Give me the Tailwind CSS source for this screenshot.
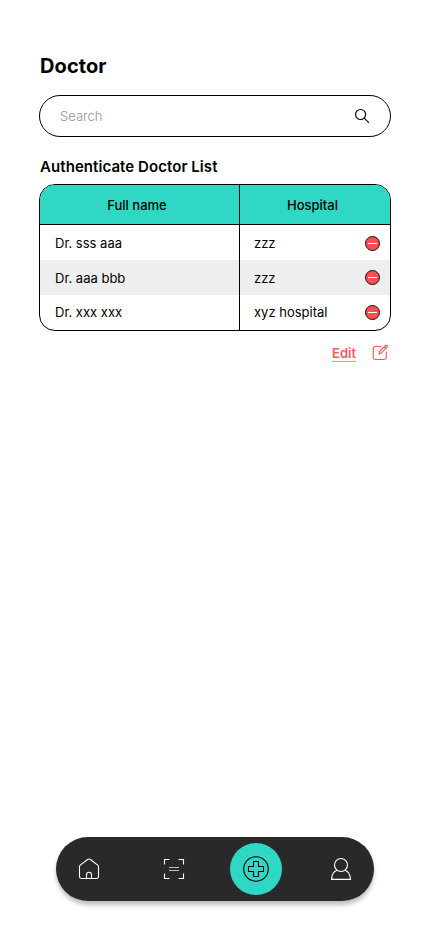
<!DOCTYPE html>
<html lang="en">
<head>
<meta charset="utf-8">
<meta name="viewport" content="width=device-width, initial-scale=1">
<title>Doctor</title>
<script src="https://cdn.jsdelivr.net/npm/@tailwindcss/browser@4"></script>
</head>
<body class="bg-white font-['Inter',sans-serif] text-black">
<div class="flex h-[932px] w-[430px] flex-col overflow-hidden">
  <main class="flex grow flex-col px-[39px] pt-[54px]">
    <h1 class="pl-px text-[20px] leading-6 font-bold tracking-[0.1px]">Doctor</h1>
    <div class="mt-[17px] flex h-[42px] items-center justify-between rounded-full border border-black pr-5 pl-5">
      <span class="pt-[2px] text-[13px] font-light text-[#949494]">Search</span>
      <svg class="size-4" viewBox="0 0 16 16" fill="none" stroke="#000" stroke-width="1.15" stroke-linecap="round"><circle cx="6.6" cy="6.5" r="5"/><path d="M10.2 10.1 14.6 14.4"/></svg>
    </div>
    <h2 class="mt-5 pl-px text-[15px] leading-5 font-semibold tracking-[0.07px]">Authenticate Doctor List</h2>
    <div class="mt-[7px] h-[147px] overflow-hidden rounded-2xl border border-black text-[13px]">
      <div class="grid h-10 grid-cols-[200px_1fr] border-b border-black bg-[#2fd8c4] text-center leading-10 font-medium">
        <div class="border-r border-black pr-[6px] pl-px">Full name</div>
        <div class="pr-[5px]">Hospital</div>
      </div>
      <div class="grid h-[35px] grid-cols-[200px_1fr] leading-[36px]">
        <div class="border-r border-black pl-[15px]">Dr. sss aaa</div>
        <div class="flex items-center justify-between pr-[10px] pl-[14px]"><span>zzz</span>
          <svg class="size-[15px]" viewBox="0 0 15 15"><circle cx="7.5" cy="7.5" r="7" fill="#ff4d4d" stroke="#111"/><path d="M3 7.5h9" stroke="#fff"/></svg></div>
      </div>
      <div class="grid h-[35px] grid-cols-[200px_1fr] bg-[#eeeeee] leading-[36px]">
        <div class="border-r border-black pl-[15px]">Dr. aaa bbb</div>
        <div class="flex items-center justify-between pr-[10px] pl-[14px]"><span>zzz</span>
          <svg class="mb-[2px] size-[15px]" viewBox="0 0 15 15"><circle cx="7.5" cy="7.5" r="7" fill="#ff4d4d" stroke="#111"/><path d="M3 7.5h9" stroke="#fff"/></svg></div>
      </div>
      <div class="grid h-[35px] grid-cols-[200px_1fr] leading-[35px]">
        <div class="border-r border-black pl-[15px]">Dr. xxx xxx</div>
        <div class="flex items-center justify-between pr-[10px] pl-[14px]"><span>xyz hospital</span>
          <svg class="size-[15px]" viewBox="0 0 15 15"><circle cx="7.5" cy="7.5" r="7" fill="#ff4d4d" stroke="#111"/><path d="M3 7.5h9" stroke="#fff"/></svg></div>
      </div>
    </div>
    <div class="mt-[13px] flex justify-end gap-4 pr-[2px] text-[#f95959]">
      <span class="h-[18px] border-b border-[#f95959]/70 text-[13px] leading-[18px] font-semibold">Edit</span>
      <svg class="size-[17px]" viewBox="0 0 17 17" fill="none" stroke="currentColor" stroke-width="1.1" stroke-linecap="round" stroke-linejoin="round"><path d="M9 2.5H3.2A1.9 1.9 0 0 0 1.3 4.4v9.2a1.9 1.9 0 0 0 1.9 1.9h9.2a1.9 1.9 0 0 0 1.9-1.9V8M7 10l.5-2.5 6-6q.8-.7 1.6 0 .8.8 0 1.6l-6 6zM12.3 2.7l1.6 1.6"/></svg>
    </div>
  </main>
  <nav class="mx-auto mb-[31px] flex h-16 w-[318px] shrink-0 items-center rounded-full bg-[#292929] pl-[22px] shadow-[0_4px_4px_rgba(0,0,0,0.25)]">
    <svg class="size-[22px]" viewBox="0 0 22 22" fill="none" stroke="#fff" stroke-width="1.1" stroke-linejoin="round"><path d="M1.5 8.7Q1.5 7.8 2.3 7.1L9.6 1.5Q11 .5 12.4 1.5L19.7 7.1Q20.5 7.8 20.5 8.7V18.6Q20.5 20.5 18.6 20.5H3.4Q1.5 20.5 1.5 18.6ZM8.5 20.5V16.7a2.5 2.5 0 0 1 5 0v3.8"/></svg>
    <svg class="ml-[63px] size-[22px]" viewBox="0 0 22 22" fill="none" stroke="#fff" stroke-width="1.1"><path d="M1.5 6.5v-5h5M15.5 1.5h5v5M20.5 15.5v5h-5M6.5 20.5h-5v-5"/><path d="M6 9.5h10M6 12.5h10" stroke="#bdbdbd"/></svg>
    <div class="ml-[45px] grid size-[52px] place-items-center rounded-full bg-[#2fd8c4]">
      <svg class="size-[26px]" viewBox="0 0 26 26" fill="none" stroke="#000" stroke-width="1.1"><circle cx="13" cy="13" r="12.3"/><path d="M10.5 5.5h5v5h5v5h-5v5h-5v-5h-5v-5h5z"/></svg>
    </div>
    <svg class="ml-12 size-[22px]" viewBox="0 0 22 22" fill="none" stroke="#fff" stroke-width="1.1" stroke-linejoin="round"><circle cx="11" cy="7" r="6.5"/><path d="M7 12.2C3.5 13.5 1.7 16.8 1.5 21.4h19C20.3 16.8 18.5 13.5 15 12.2"/></svg>
  </nav>
</div>
</body>
</html>
